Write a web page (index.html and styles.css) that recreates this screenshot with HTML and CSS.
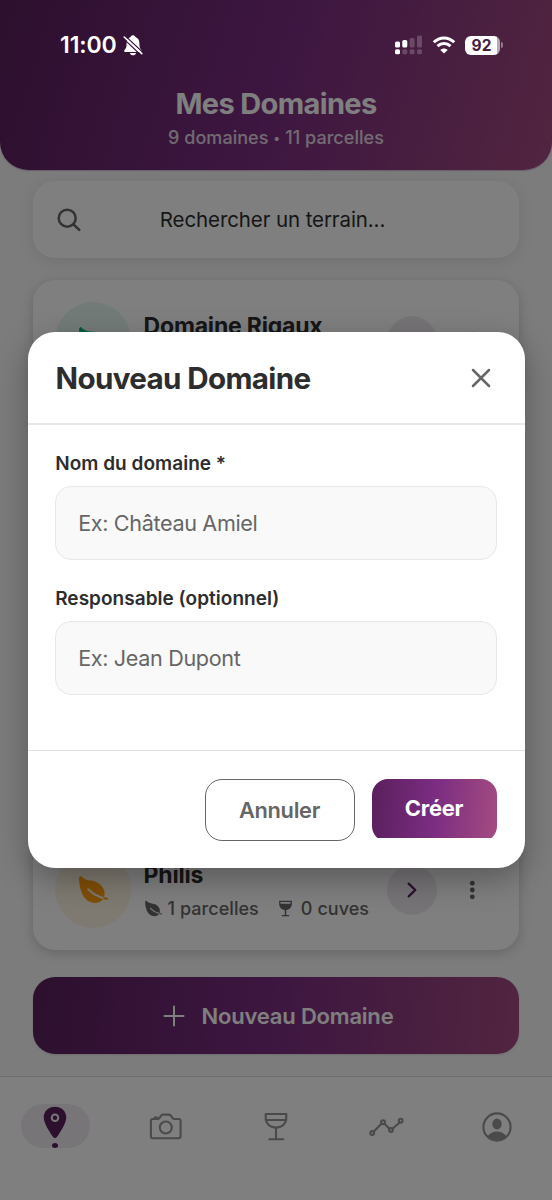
FILE: index.html
```html
<!DOCTYPE html>
<html lang="fr">
<head>
<meta charset="utf-8">
<title>Mes Domaines</title>
<link rel="stylesheet" href="styles.css">
</head>
<body>
<svg class="defs" aria-hidden="true">
  <symbol id="leaf" viewBox="0 0 512 512"><path d="M161.35 242a16 16 0 0122.62-.68c73.63 69.36 147.51 111.56 234.45 133.07 11.73-32 12.77-67.22 2.64-101.58-13.44-45.59-44.74-85.31-90.49-114.86-40.84-26.38-81.66-33.25-121.15-39.89-49.82-8.38-96.88-16.3-141.79-63.85-5-5.26-11.81-7.37-18.32-5.66-7.44 2-12.43 7.88-14.82 17.6-5.6 22.75-2 86.51 13.75 153.82 25.29 108.14 65.65 162.86 95.06 189.73 38 34.69 87.62 53.9 136.93 53.9a186 186 0 0027.77-2.04c41.71-6.32 76.43-27.27 96-57.75-89.49-23.28-165.94-67.55-242-139.16a16 16 0 01-.65-22.65zM467.43 384.19c-16.83-2.59-33.13-5.84-49-9.77a157.71 157.71 0 01-12.13 25.68c-.73 1.25-1.5 2.49-2.29 3.71a584.21 584.21 0 0058.56 12 16 16 0 104.87-31.62z"/></symbol>
  <symbol id="chevron" viewBox="0 0 12 18"><path d="M2.700 2.600l6.600 6.400-6.600 6.400" fill="none" stroke="currentColor" stroke-width="2.300" stroke-linecap="round" stroke-linejoin="round"/></symbol>
  <symbol id="dots" viewBox="0 0 6 20"><circle cx="3.300" cy="3.200" r="2.400"/><circle cx="3.300" cy="10" r="2.400"/><circle cx="3.300" cy="16.800" r="2.400"/></symbol>
  <symbol id="glass" viewBox="0 0 14 16"><path fill-rule="evenodd" d="M1 .8h12v2.400c0 3.500-2 5.800-5.300 6.100v4.900h2.800v1.200h-7v-1.200h2.800V9.300C3 9 1 6.700 1 3.200zm1.300 1.100v1.600h9.400V1.900z"/></symbol>
</svg>

<div class="screen">
  <header class="header">
    <h1 class="header-title">Mes Domaines</h1>
    <p class="header-sub">9 domaines <span class="bullet">•</span> 11 parcelles</p>
  </header>

  <div class="search">
    <svg class="search-icon" viewBox="0 0 24 24"><circle cx="10.200" cy="10.200" r="8.500"/><path d="M16.500 16.500l5.800 5.300"/></svg>
    <span class="search-text">Rechercher un terrain...</span>
  </div>

  <main class="list">
    <article class="card">
      <div class="card-icon green"><svg class="leaf"><use href="#leaf"/></svg></div>
      <div class="card-body">
        <h2 class="card-title">Domaine Rigaux</h2>
      </div>
      <div class="go"><svg class="chevron"><use href="#chevron"/></svg></div>
      <svg class="dots"><use href="#dots"/></svg>
    </article>
    <article class="card">
      <div class="card-icon amber"><svg class="leaf"><use href="#leaf"/></svg></div>
      <div class="card-body">
        <h2 class="card-title">Philis</h2>
        <p class="stats">
          <svg class="mini-leaf"><use href="#leaf"/></svg><span>1 parcelles</span>
          <svg class="mini-glass"><use href="#glass"/></svg><span>0 cuves</span>
        </p>
      </div>
      <div class="go"><svg class="chevron"><use href="#chevron"/></svg></div>
      <svg class="dots"><use href="#dots"/></svg>
    </article>
  </main>

  <div class="add">
    <svg class="plus" viewBox="0 0 22 22"><path d="M11 1.500v19M1.500 11h19"/></svg>
    <span>Nouveau Domaine</span>
  </div>

  <nav class="nav">
    <div class="tab"><div class="pill">
      <svg class="pin" viewBox="0 0 24 33"><path fill-rule="evenodd" d="M12 .7C5.600.7.700 5.300.7 11.300c0 5.700 5.600 14.500 9.200 19.400 1.300 1.700 2.900 1.700 4.200 0 3.600-4.900 9.200-13.700 9.200-19.400C23.300 5.300 18.400.7 12 .7zm0 6.700a4.300 4.300 0 110 8.600 4.300 4.300 0 010-8.600z"/><circle cx="12" cy="11.700" r="2.200"/></svg>
      <span class="pill-dot"></span>
    </div></div>
    <div class="tab"><svg class="line-icon" viewBox="0 0 34 34"><path d="M3.700 9h4.800c1 0 1.500-.3 2.100-1.100l1.300-2c.6-.9 1.100-1.300 2-1.300h6.200c.9 0 1.400.4 2 1.300l1.300 2c.6.8 1.100 1.100 2.100 1.100h4.100c1.300 0 2 .7 2 2v15.300c0 1.300-.7 2-2 2H3.900c-1.300 0-2-.7-2-2V11c0-1.200.6-2 1.800-2zM5.700 8.500v-.9h2.500v.9"/><circle cx="16.800" cy="17.500" r="6"/></svg></div>
    <div class="tab"><svg class="line-icon" viewBox="0 0 34 34"><path d="M6.700 4h20.600v3c0 6.600-4 10.500-10.300 10.500S6.700 13.600 6.700 7zM6.700 10h20.600M17 17.500v11.700M10.300 29.200h14"/></svg></div>
    <div class="tab"><svg class="line-icon" viewBox="0 0 34 34"><path d="M4.600 21.800l7.800-8M15.800 13.900l4.600 4.800M23.700 18.500l7-6"/><circle cx="3.200" cy="23" r="1.900"/><circle cx="14" cy="12.200" r="1.900"/><circle cx="22" cy="20" r="1.900"/><circle cx="31.700" cy="10.700" r="1.900"/></svg></div>
    <div class="tab"><svg class="line-icon" viewBox="0 0 34 34"><circle cx="17" cy="17" r="13.600"/><ellipse class="solid" cx="17" cy="14" rx="4.700" ry="5.400"/><path class="solid" d="M7.800 26.200c2-3.200 5.200-4.700 9.200-4.700s7.200 1.500 9.200 4.700a13.600 13.600 0 01-18.400 0z"/></svg></div>
  </nav>

  <div class="overlay">
    <section class="modal">
      <div class="modal-head">
        <h2 class="modal-title">Nouveau Domaine</h2>
        <svg class="close" viewBox="0 0 20 20"><path d="M2 2l16 16M18 2L2 18"/></svg>
      </div>
      <div class="modal-body">
        <label class="label">Nom du domaine *</label>
        <div class="input">Ex: Château Amiel</div>
        <label class="label">Responsable (optionnel)</label>
        <div class="input">Ex: Jean Dupont</div>
      </div>
      <div class="modal-foot">
        <div class="btn-cancel">Annuler</div>
        <div class="btn-clip"><div class="btn-create">Créer</div></div>
      </div>
    </section>
  </div>

  <div class="status">
    <span class="time">11:00</span>
    <svg class="bell" viewBox="0 0 20 22"><path d="M10 1.200c1.300 0 2.200.8 2.400 1.900 2.600 1 4 3.300 4 6 0 4.400.7 5.600 2.100 7 .7.800.4 1.800-.7 1.800H2.200c-1.100 0-1.400-1-.7-1.800 1.400-1.400 2.100-2.600 2.100-7 0-2.700 1.400-5 4-6C7.800 2 8.700 1.200 10 1.200zM7 18.900h6c-.3 1.500-1.400 2.300-3 2.300s-2.700-.8-3-2.300z"/><path class="bell-gap" d="M.2 4.400l17.600 16.600M2 1.600l17.600 16.600"/><path class="bell-slash" d="M1.200 3l17.600 16.600"/></svg>
    <span class="spacer"></span>
    <svg class="signal" viewBox="0 0 28 20"><g><rect x="0" y="6.500" width="5" height="6" rx="1.600"/><rect x="7.300" y="5" width="5" height="7.500" rx="1.600"/><rect x="0" y="14.300" width="5" height="5" rx="1.600"/></g><g opacity=".2"><rect x="14.600" y="3" width="5" height="9.500" rx="1.600"/><rect x="22" y=".5" width="5" height="12" rx="1.600"/><rect x="7.300" y="14.300" width="5" height="5" rx="1.600"/><rect x="14.600" y="14.300" width="5" height="5" rx="1.600"/><rect x="22" y="14.300" width="5" height="5" rx="1.600"/></g></svg>
    <svg class="wifi" viewBox="0 0 24 18"><path d="M1.800 6.300c5.800-5.700 14.600-5.700 20.400 0M5.500 10.200c3.800-3.600 9.200-3.600 13 0"/><path class="fan" d="M12 17.600l-3.700-3.700c2.100-2 5.300-2 7.400 0z"/></svg>
    <div class="battery"><span>92</span></div><i class="battery-cap"></i>
  </div>
</div>
</body>
</html>
```
FILE: styles.css
```css
* { box-sizing: border-box; }
body, h1, h2, p { margin: 0; }
body {
  font-family: Inter, "Liberation Sans", sans-serif;
  background: #f8f8f8;
  color: #2d2d2d;
}
svg { display: block; flex: none; fill: currentColor; overflow: visible; }
.defs { position: absolute; width: 0; height: 0; }

.screen {
  position: relative;
  width: 552px;
  height: 1200px;
  display: flex;
  flex-direction: column;
  overflow: hidden;
  background: #f8f8f8;
}

.header {
  height: 170px;
  padding-top: 86px;
  text-align: center;
  color: #fff;
  border-radius: 0 0 28px 28px;
  background: linear-gradient(107deg, #5a1f5c, #7b2d82 50%, #a44b80);
  box-shadow: 0 1px 1px rgba(123, 45, 130, .3);
}
.header-title { font-size: 29px; line-height: 36px; font-weight: 700; letter-spacing: -.65px; }
.header-sub { margin-top: 5px; font-size: 18px; line-height: 22px; font-weight: 500; letter-spacing: .05px; opacity: .8; }
.bullet { font-size: 13px; vertical-align: 1px; }

.search {
  display: flex;
  align-items: center;
  height: 77px;
  margin: 11px 33px 0;
  padding: 0 24px;
  border-radius: 22px;
  background: #fff;
  box-shadow: 0 3px 16px rgba(0, 0, 0, .09);
}
.search-icon { width: 24px; height: 24px; fill: none; stroke: #666; stroke-width: 2.5; stroke-linecap: round; }
.search-text { flex: 1; padding-right: 31px; text-align: center; font-size: 20.5px; line-height: 26px; letter-spacing: -.1px; }

.list {
  display: flex;
  flex-direction: column;
  justify-content: space-between;
  height: 681px;
  margin-top: 11px;
  padding: 11px 33px 0;
}
.card {
  display: flex;
  align-items: center;
  height: 121px;
  padding-left: 22px;
  border-radius: 22px;
  background: #fff;
  box-shadow: 0 3px 12px rgba(0, 0, 0, .18);
}
.card-icon { display: grid; place-items: center; width: 76px; height: 77px; border-radius: 50%; }
.green { background: #e6f7f1; color: #10b981; }
.amber { background: #fef4e2; color: #ff9f0a; }
.leaf { width: 33px; height: 33px; }
.card-body { width: 244px; height: 58px; margin-left: 12px; padding-left: .6px; }
.card-title { font-size: 23px; line-height: 28px; font-weight: 700; letter-spacing: -.2px; color: #2d2d2d; }
.stats { display: flex; align-items: center; margin-top: 8px; font-size: 18px; line-height: 24px; font-weight: 500; letter-spacing: .05px; color: #666; white-space: nowrap; }
.mini-leaf { width: 19px; height: 19px; margin: 0 5px 0 0; }
.mini-glass { width: 15px; height: 17px; margin: 0 8px 0 19px; }
.go { display: grid; place-items: center; width: 50px; height: 50px; border-radius: 50%; background: #efe9ef; color: #5a1f5c; }
.chevron { width: 12px; height: 18px; }
.dots { width: 6px; height: 20px; margin-left: 32px; color: #666; }

.add {
  display: flex;
  align-items: center;
  justify-content: center;
  gap: 17px;
  height: 77px;
  margin: 27px 33px 22px;
  padding-left: 4px;
  border-radius: 22px;
  color: #fff;
  font-size: 22px;
  font-weight: 600;
  letter-spacing: -.2px;
  background: linear-gradient(95deg, #5a1f5c, #7b2d82 50%, #a44b80);
  box-shadow: 0 1px 2px rgba(0, 0, 0, .12);
}
.plus { width: 22px; height: 22px; fill: none; stroke: #fff; stroke-width: 2; stroke-linecap: round; }

.nav {
  display: grid;
  grid-template-columns: repeat(5, 1fr);
  height: 124px;
  padding-top: 27px;
  border-top: 1px solid #ddd;
  background: #fff;
  color: #999;
}
.tab { display: flex; justify-content: center; height: 44px; align-items: center; }
.pill { display: flex; flex-direction: column; align-items: center; width: 69px; height: 44px; padding-top: 2px; border-radius: 22px; background: #f1ebf2; color: #5a1f5c; }
.pin { width: 24px; height: 33px; }
.pill-dot { width: 6px; height: 6px; margin-top: 4px; border-radius: 50%; background: #5a1f5c; }
.line-icon { width: 34px; height: 34px; margin-top: 2px; fill: none; stroke: #949494; stroke-width: 2.1; stroke-linecap: round; stroke-linejoin: round; }
.solid { fill: #949494; stroke: none; }

.overlay {
  position: absolute;
  inset: 0;
  display: flex;
  align-items: center;
  justify-content: center;
  background: rgba(0, 0, 0, .5);
}
.modal {
  display: flex;
  flex-direction: column;
  width: 497px;
  height: 536px;
  border-radius: 27px;
  background: #fff;
  box-shadow: 0 11px 32px rgba(0, 0, 0, .3);
}
.modal-head { display: flex; align-items: center; justify-content: space-between; height: 93px; padding: 0 34px 0 28px; border-bottom: 2px solid #e8e8e8; }
.modal-title { font-size: 29.6px; line-height: 36px; font-weight: 700; letter-spacing: -.65px; }
.close { width: 20px; height: 20px; fill: none; stroke: #666; stroke-width: 2.5; stroke-linecap: round; }
.modal-body { display: flex; flex-direction: column; flex: 1; padding: 28px 28px 0 27px; }
.label { padding-left: .7px; font-size: 19px; line-height: 22px; font-weight: 600; letter-spacing: .03px; }
.input { display: flex; align-items: center; height: 73.5px; margin: 11px 0 28.5px; padding-left: 22.7px; border: 1.5px solid #e8e8e8; border-radius: 16px; background: #f9f9f9; color: #666; font-size: 21.6px; letter-spacing: -.35px; }
.modal-foot { display: flex; justify-content: flex-end; gap: 17px; height: 118px; padding: 28px 28px 0; border-top: 1px solid #e0e0e0; }
.btn-cancel { display: grid; place-items: center; width: 150px; height: 62px; border: 1.5px solid #666; border-radius: 17px; color: #666; font-size: 21.8px; font-weight: 600; letter-spacing: -.3px; }
.btn-clip { width: 125px; height: 59px; overflow: hidden; }
.btn-create { height: 63px; padding-top: 15px; border-radius: 16px; text-align: center; color: #fff; font-size: 22px; line-height: 28px; font-weight: 700; letter-spacing: -.3px; background: linear-gradient(95deg, #5a1f5c, #7b2d82 50%, #a44b80); }

.status { position: absolute; inset: 0 0 auto; display: flex; align-items: center; height: 60px; padding: 30px 49px 0 60px; color: #fff; }
.time { font-size: 23px; font-weight: 600; letter-spacing: -.1px; }
.bell { width: 20px; height: 22px; margin-left: 6px; }
.bell-gap { fill: none; stroke: #36123a; stroke-width: 1.2; }
.bell-slash { fill: none; stroke: #fff; stroke-width: 1.6; stroke-linecap: round; }
.spacer { flex: 1; }
.signal { width: 28px; height: 20px; }
.wifi { width: 24px; height: 18px; margin-left: 9px; fill: none; stroke: #fff; stroke-width: 3; }
.fan { fill: #fff; stroke: none; }
.battery { display: grid; place-items: center; width: 35px; height: 19px; margin-left: 9px; padding-right: 2px; border-radius: 6px; background: linear-gradient(90deg, #fff 32px, #b9a8b6 32px); color: #46203f; font-size: 15.500px; line-height: 19px; font-weight: 700; }
.battery-cap { width: 2px; height: 6px; margin-left: 1px; border-radius: 0 2px 2px 0; background: #927a8c; }
```
